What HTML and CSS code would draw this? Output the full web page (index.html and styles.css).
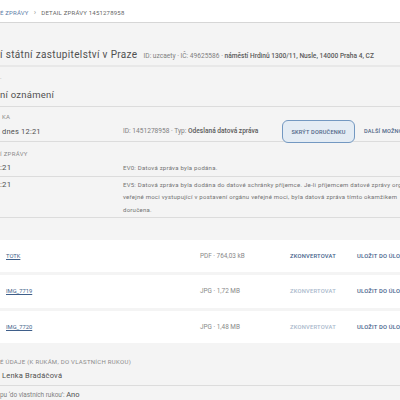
FILE: index.html
```html
<!DOCTYPE html>
<html lang="cs">
<head>
<meta charset="utf-8">
<link rel="stylesheet" href="styles.css">
</head>
<body>
<div class="topbar">
  <nav class="crumbs">
    <span class="crumb-link">É ZPRÁVY</span>
    <span class="crumb-sep">›</span>
    <span class="crumb-current">DETAIL ZPRÁVY 1451278958</span>
  </nav>
</div>
<main class="page">
  <section class="head">
    <h1 class="title">í státní zastupitelství v Praze</h1>
    <span class="meta">ID: uzcaety · IČ: 49625586 · <b>náměstí Hrdinů 1300/11, Nusle, 14000 Praha 4, CZ</b></span>
  </section>
  <section class="subject">
    <div class="label">·</div>
    <div class="subject-text">ní oznámení</div>
  </section>
  <section class="receipt">
    <div class="receipt-left">
      <div class="label">KA</div>
      <div class="value">dnes 12:21</div>
    </div>
    <div class="receipt-meta">ID: 1451278958 · Typ: <b>Odeslaná datová zpráva</b></div>
    <button class="btn-outline">SKRÝT DORUČENKU</button>
    <span class="btn-text">DALŠÍ MOŽNOSTI</span>
  </section>
  <section class="events">
    <div class="label events-label">Í ZPRÁVY</div>
    <div class="event">
      <div class="event-time">:21</div>
      <div class="event-text">EV0: Datová zpráva byla podána.</div>
    </div>
    <div class="event">
      <div class="event-time">:21</div>
      <div class="event-text">EV5: Datová zpráva byla dodána do datové schránky příjemce. Je-li příjemcem datové zprávy orgán<br>veřejné moci vystupující v postavení orgánu veřejné moci, byla datová zpráva tímto okamžikem<br>doručena.</div>
    </div>
  </section>
  <section class="files">
    <div class="file">
      <span class="file-name">TOTK</span>
      <span class="file-info">PDF · 764,03 kB</span>
      <span class="file-act">ZKONVERTOVAT</span>
      <span class="file-save">ULOŽIT DO ÚLOŽIŠTĚ</span>
    </div>
    <div class="file">
      <span class="file-name">IMG_7719</span>
      <span class="file-info">JPG · 1,72 MB</span>
      <span class="file-act disabled">ZKONVERTOVAT</span>
      <span class="file-save">ULOŽIT DO ÚLOŽIŠTĚ</span>
    </div>
    <div class="file">
      <span class="file-name">IMG_7720</span>
      <span class="file-info">JPG · 1,48 MB</span>
      <span class="file-act disabled">ZKONVERTOVAT</span>
      <span class="file-save">ULOŽIT DO ÚLOŽIŠTĚ</span>
    </div>
  </section>
  <section class="delivery">
    <div class="label">É ÚDAJE (K RUKÁM, DO VLASTNÍCH RUKOU)</div>
    <div class="person">Lenka Bradáčová</div>
    <div class="own">pu ‘do vlastních rukou’: <span class="own-val">Ano</span></div>
  </section>
</main>
</body>
</html>
```
FILE: styles.css
```css
* { box-sizing: border-box; }
html, body { margin: 0; padding: 0; }
body {
  width: 400px;
  height: 400px;
  overflow: hidden;
  background: #f4f4f4;
  font-family: Roboto, "Noto Sans", sans-serif;
  color: #505050;
}
.topbar {
  background: #fff;
  height: 23px;
  border-bottom: 1px solid #d6d6d6;
  padding-top: 9px;
}
.crumbs {
  display: flex;
  align-items: center;
  gap: 5px;
  font-size: 6px;
  line-height: 8px;
  letter-spacing: 0.2px;
  white-space: nowrap;
}
.crumb-link { color: #5b7ba6; }
.crumb-sep { color: #999; font-size: 8px; }
.crumb-current { color: #666; }
.page { display: flex; flex-direction: column; }
.head {
  display: flex;
  align-items: baseline;
  gap: 6px;
  padding: 25px 0 3px 0;
  border-bottom: 2px solid #e8e8e8;
  white-space: nowrap;
}
.title {
  margin: 0;
  font-size: 10px;
  line-height: 14px;
  font-weight: 400;
  letter-spacing: 0.35px;
  color: #505050;
  flex-shrink: 0;
}
.meta { font-size: 6.6px; color: #808080; flex-shrink: 0; }
.meta b { font-weight: 500; color: #5a5a5a; }
.label {
  font-size: 6px;
  line-height: 7px;
  color: #8a8a8a;
  letter-spacing: 0.3px;
  text-transform: uppercase;
  white-space: nowrap;
}
.subject {
  padding: 6.5px 0 5.5px 0;
  border-bottom: 1px solid #dcdcdc;
}
.subject-text {
  font-size: 9.5px;
  line-height: 13px;
  letter-spacing: 0.25px;
  margin-top: 7px;
  color: #505050;
}
.receipt {
  display: flex;
  align-items: flex-end;
  border-bottom: 1px solid #dcdcdc;
  height: 35px;
  white-space: nowrap;
}
.receipt-left {
  width: 123px;
  flex-shrink: 0;
  padding: 5.5px 0 4px 2px;
  align-self: stretch;
  display: flex;
  flex-direction: column;
  justify-content: space-between;
}
.value { font-size: 7.5px; line-height: 11px; letter-spacing: 0.2px; color: #505050; }
.receipt-meta { font-size: 6.6px; line-height: 8px; color: #808080; padding-bottom: 6px; width: 159px; flex-shrink: 0; }
.receipt-meta b { font-weight: 500; color: #5a5a5a; }
.btn-outline {
  flex-shrink: 0;
  margin-bottom: -2px;
  height: 23px;
  width: 73px;
  padding: 0;
  border: 1.5px solid #7398c1;
  border-radius: 6px;
  background: #e4ecf4;
  color: #4f6687;
  font-family: Roboto, sans-serif;
  font-size: 5.6px;
  font-weight: 500;
  letter-spacing: 0.2px;
}
.btn-text {
  flex-shrink: 0;
  margin-left: 9px;
  padding-bottom: 6px;
  font-size: 5.6px;
  line-height: 8px;
  font-weight: 500;
  color: #4f6687;
  letter-spacing: 0.2px;
}
.events { padding-top: 7.5px; }
.events-label { margin-bottom: 3.5px; }
.event {
  display: flex;
  border-bottom: 1px solid #dcdcdc;
  padding: 2px 0 1px 0;
  white-space: nowrap;
}
.event-time { width: 123px; flex-shrink: 0; font-size: 7.8px; color: #505050; line-height: 12.5px; letter-spacing: 0.2px; }
.event-text { flex-shrink: 0; font-size: 6px; color: #737373; line-height: 12.5px; letter-spacing: 0.25px; }
.files {
  margin-top: 21.5px;
  display: flex;
  flex-direction: column;
  gap: 3px;
}
.file {
  background: #fff;
  height: 32.5px;
  display: grid;
  grid-template-columns: 200px 90px 67px 100px;
  align-items: center;
  font-size: 5.8px;
  white-space: nowrap;
  overflow: hidden;
}
.file-name { padding-left: 6px; color: #3f5f8a; text-decoration: underline; }
.file-info { color: #888; font-size: 6.4px; }
.file-act { color: #44618a; font-weight: 500; letter-spacing: 0.2px; }
.file-act.disabled { color: #a9b8cb; }
.file-save { color: #44618a; font-weight: 500; letter-spacing: 0.2px; }
.delivery { padding-top: 15px; }
.person {
  font-size: 7.5px;
  line-height: 11px;
  letter-spacing: 0.2px;
  margin-top: 5px;
  padding: 0 0 3.5px 2px;
  border-bottom: 1px solid #dcdcdc;
  color: #505050;
}
.own { font-size: 6.4px; line-height: 11px; color: #808080; margin-top: 3px; white-space: nowrap; }
.own-val { font-size: 7.5px; color: #505050; }
```
